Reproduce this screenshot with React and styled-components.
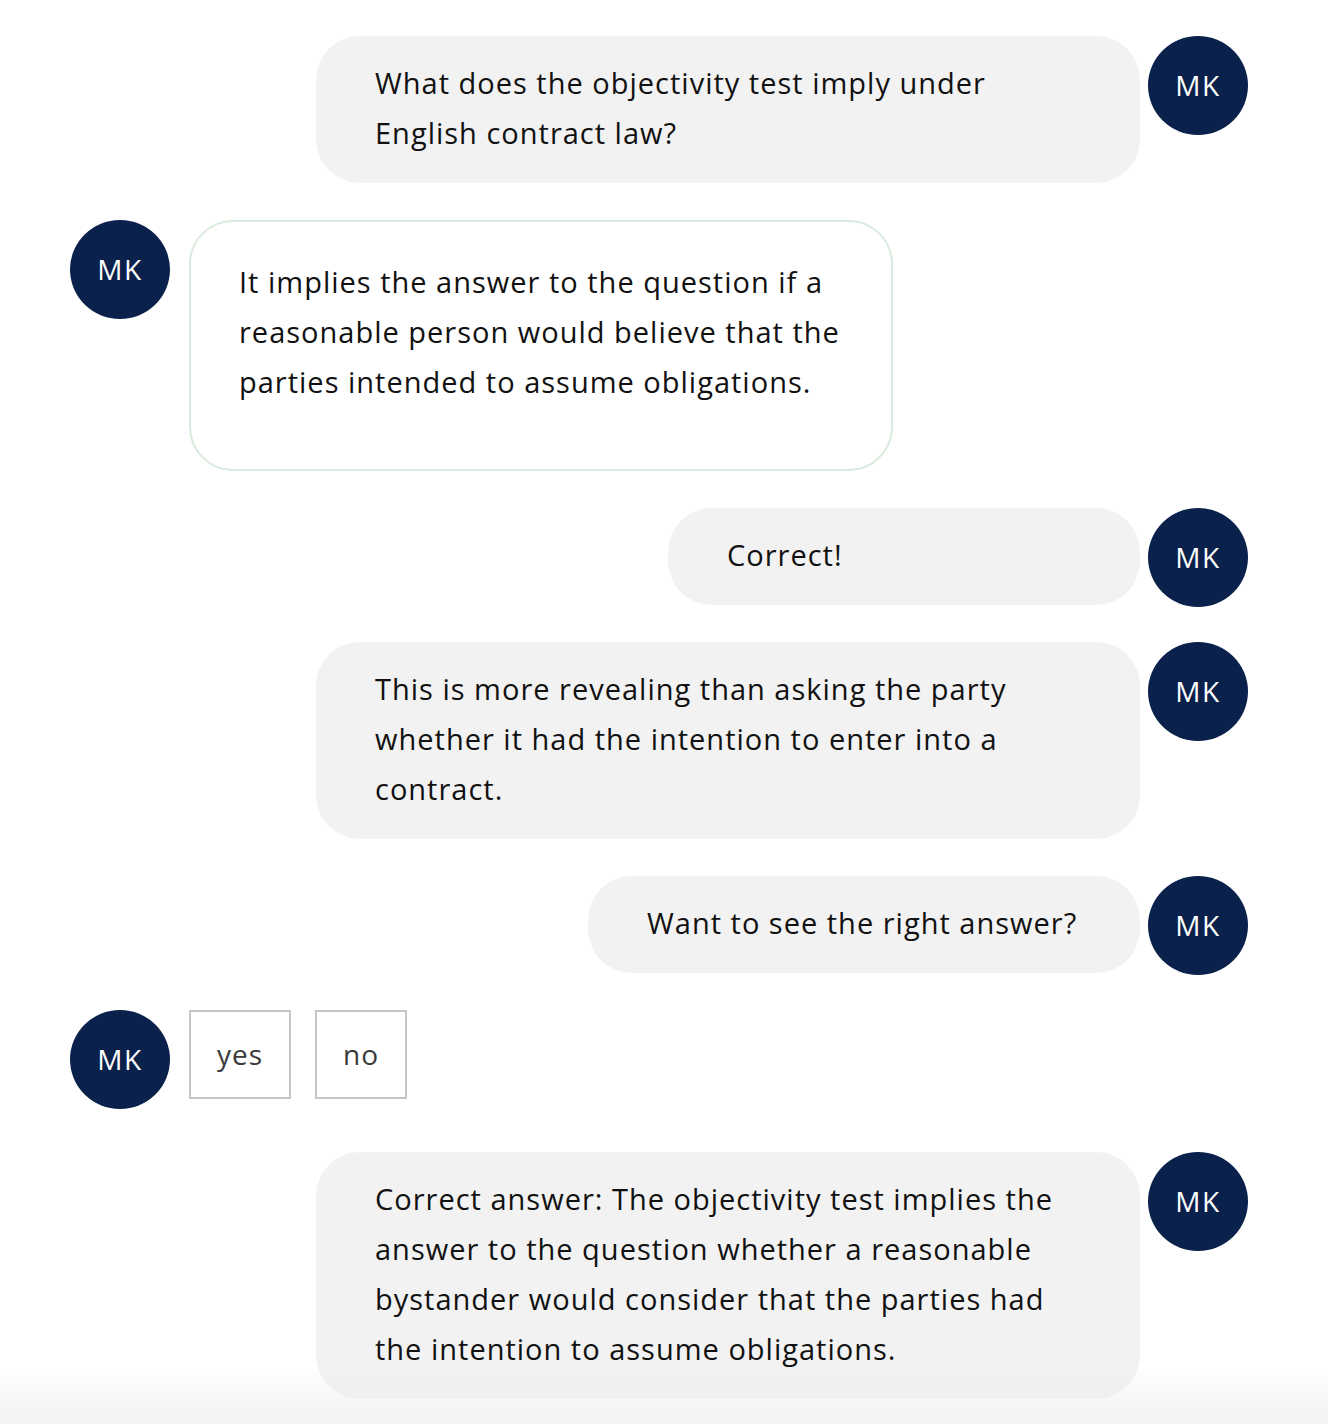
import React from "react";
import styled, { createGlobalStyle } from "styled-components";

const GlobalStyle = createGlobalStyle`
    html, body {
        margin: 0;
        padding: 0;
        background: #ffffff;
    }

    body {
        font-family: "Open Sans", "Liberation Sans", sans-serif;
        color: #111111;
    }
`;

const messages = [
    { from: "user", width: 824, lines: ["What does the objectivity test imply under", "English contract law?"] },
    {
        from: "bot",
        width: 704,
        lines: [
            "It implies the answer to the question if a",
            "reasonable person would believe that the",
            "parties intended to assume obligations.",
        ],
    },
    { from: "user", width: 472, lines: ["Correct!"] },
    {
        from: "user",
        width: 824,
        lines: ["This is more revealing than asking the party", "whether it had the intention to enter into a", "contract."],
    },
    { from: "user", width: 552, lines: ["Want to see the right answer?"] },
    { from: "choice", options: ["yes", "no"] },
    {
        from: "user",
        width: 824,
        lines: [
            "Correct answer: The objectivity test implies the",
            "answer to the question whether a reasonable",
            "bystander would consider that the parties had",
            "the intention to assume obligations.",
        ],
    },
];

const App = () => {
    return (
        <>
            <GlobalStyle />
            <Chat>
                {messages.map((msg, i) => {
                    if (msg.from === "choice") {
                        return (
                            <Row key={i} $side="bot" $tight>
                                <Avatar>MK</Avatar>
                                <Choices>
                                    {msg.options.map((o) => (
                                        <ChoiceButton key={o}>{o}</ChoiceButton>
                                    ))}
                                </Choices>
                            </Row>
                        );
                    }
                    const isUser = msg.from === "user";
                    return (
                        <Row key={i} $side={msg.from}>
                            {!isUser && <Avatar>MK</Avatar>}
                            <Bubble $side={msg.from} style={{ width: msg.width }}>
                                {msg.lines.map((l, j) => (
                                    <Line key={j}>{l}</Line>
                                ))}
                            </Bubble>
                            {isUser && <Avatar>MK</Avatar>}
                        </Row>
                    );
                })}
            </Chat>
            <BottomFade />
        </>
    );
};

const Chat = styled.div`
    display: flex;
    flex-direction: column;
    gap: 37px;
    padding: 36px 80px 30px 70px;
`;

const Row = styled.div`
    display: flex;
    align-items: flex-start;
    justify-content: ${(p) => (p.$side === "user" ? "flex-end" : "flex-start")};
    gap: ${(p) => (p.$side === "user" ? "8px" : "19px")};
    margin-bottom: ${(p) => (p.$tight ? "8px" : "0")};
`;

const Avatar = styled.div`
    flex: 0 0 100px;
    width: 100px;
    height: 99px;
    margin-bottom: -2px;
    border-radius: 50%;
    background: #0a214c;
    color: #ffffff;
    display: flex;
    align-items: center;
    justify-content: center;
    font-size: 28px;
    letter-spacing: 1.5px;
    padding-bottom: 2px;
    box-sizing: border-box;
`;

const Bubble = styled.div`
    box-sizing: border-box;
    font-size: 29px;
    letter-spacing: 1px;
    line-height: 50px;
    border-radius: 44px;
    ${(p) =>
        p.$side === "user"
            ? `
        background: #f2f2f2;
        padding: 22px 59px 25px;
    `
            : `
        background: #ffffff;
        border: 2px solid #d9ebdc;
        padding: 35px 48px 62px;
    `}
`;

const Line = styled.div`
    white-space: nowrap;
`;

const Choices = styled.div`
    display: flex;
    gap: 24px;
`;

const ChoiceButton = styled.div`
    box-sizing: border-box;
    height: 89px;
    padding: 0 26px 2px;
    border: 2px solid #c6c6c6;
    background: #ffffff;
    color: #3a3a3a;
    font-size: 28px;
    letter-spacing: 1px;
    display: flex;
    align-items: center;
    justify-content: center;
`;

const BottomFade = styled.div`
    position: fixed;
    left: 0;
    right: 0;
    bottom: 0;
    height: 56px;
    pointer-events: none;
    background: linear-gradient(to bottom, rgba(238, 238, 238, 0), rgba(238, 238, 238, 0.75));
`;

export default App;
